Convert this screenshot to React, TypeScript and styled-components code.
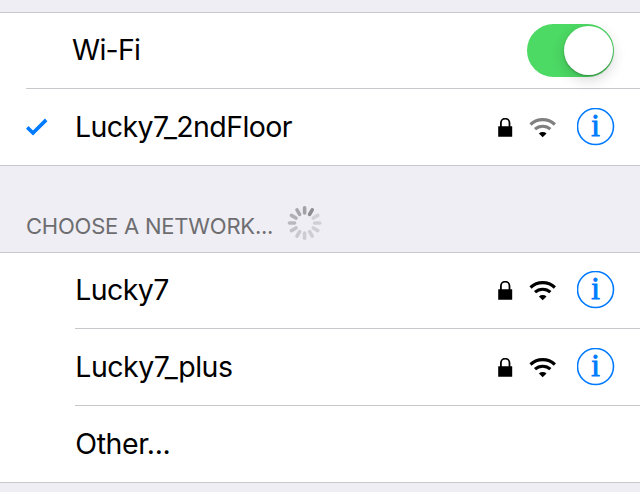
import React from "react";
import styled, { createGlobalStyle } from "styled-components";

const Global = createGlobalStyle`
  html, body { margin: 0; background: #efeef4; overflow: hidden; }
  * { box-sizing: border-box; }
`;

const Screen = styled.main`
  width: 640px;
  height: 492px;
  padding-top: 12px;
  background: #efeef4;
  font-family: Inter, "Liberation Sans", sans-serif;
  font-feature-settings: "calt" 0;
  color: #000;
`;

const Group = styled.section`
  background: #fff;
  border-top: 1px solid #c8c7cc;
  border-bottom: 1px solid #c8c7cc;
`;

const Row = styled.div<{ $height: number; $inset: number; $last?: boolean; $lift?: number }>`
  height: ${(p) => p.$height}px;
  margin-left: ${(p) => p.$inset}px;
  padding: 0 25px ${(p) => p.$lift ?? 0}px 0;
  display: flex;
  align-items: center;
  border-bottom: ${(p) => (p.$last ? "0" : "1px solid #c8c7cc")};
`;

const Label = styled.span<{ $spacing: number; $indent?: number; $lift?: number }>`
  flex: 1;
  margin-left: ${(p) => p.$indent ?? 0}px;
  padding-bottom: ${(p) => p.$lift ?? 0}px;
  font-size: 28.5px;
  line-height: 36px;
  letter-spacing: ${(p) => p.$spacing}px;
  white-space: nowrap;
`;

const Switch = styled.button`
  width: 87px;
  height: 53px;
  margin-right: 0.6px;
  padding: 2px 1.4px 2px 2px;
  border: 0;
  border-radius: 27px;
  background: #4cd964;
  display: flex;
  justify-content: flex-end;
`;

const Knob = styled.span`
  width: 49px;
  height: 49px;
  border-radius: 50%;
  background: #fff;
  box-shadow: 0 1px 2px rgba(0, 0, 0, 0.28), 0 5px 14px rgba(0, 0, 0, 0.16);
`;

const CheckSlot = styled.span`
  width: 49px;
  height: 24px;
  display: flex;
`;

const Accessories = styled.div`
  height: 38px;
  display: flex;
  align-items: center;
`;

const LockSvg = styled.svg`
  display: block;
  margin: 1px 16px 0 0;
`;

const WifiSvg = styled.svg`
  display: block;
  margin: 1px 20px 0 0;
`;

const InfoSvg = styled.svg`
  display: block;
`;

const InfoLetter = styled.text`
  font-family: "Liberation Serif", serif;
  font-size: 31px;
  fill: #007aff;
  stroke: #007aff;
  stroke-width: 0.9px;
  text-anchor: middle;
`;

const SectionHeader = styled.header`
  height: 86px;
  padding-left: 26px;
  display: flex;
  align-items: flex-start;
`;

const SectionTitle = styled.h2`
  width: 261px;
  margin: 46px 0 0;
  font-size: 22px;
  line-height: 28px;
  font-weight: 400;
  letter-spacing: -0.22px;
  color: #6d6d70;
  white-space: nowrap;
`;

const SpinnerSvg = styled.svg`
  display: block;
  margin-top: 39px;
`;

const Check = () => (
  <svg width="24" height="24" viewBox="0 0 24 24">
    <path d="M1.2 12.4 7 18 20.2 4.9" fill="none" stroke="#007aff" strokeWidth="3.6" />
  </svg>
);

const Lock = () => (
  <LockSvg width="15" height="20" viewBox="0 0 15 20">
    <rect x="0.2" y="8.2" width="14" height="10.6" rx="0.4" />
    <path d="M2.9 9V5a4.3 4.3 0 0 1 8.6 0V9" fill="none" stroke="#000" strokeWidth="1.8" />
  </LockSvg>
);

const Wifi = ({ weak }: { weak?: boolean }) => (
  <WifiSvg width="28" height="20" viewBox="0 0 28 20">
    <g fill="none" stroke={weak ? "#808080" : "#000"} strokeWidth="3.1">
      <path d="M1.5 6.5A17.8 17.8 0 0 1 25.9 6.5" />
      <path d="M6 11.2A11.4 11.4 0 0 1 21.4 11.2" />
    </g>
    <path d="M9.9 15.4A5.6 5.6 0 0 1 17.5 15.4L13.7 19.2Z" />
  </WifiSvg>
);

const Info = () => (
  <InfoSvg width="38" height="38" viewBox="0 0 38 38">
    <circle cx="18.5" cy="18.5" r="18" fill="none" stroke="#007aff" strokeWidth="1.6" />
    <InfoLetter x="18.5" y="28.2">i</InfoLetter>
  </InfoSvg>
);

const BLADES = ["#a2a2a5", "#8e8e92", "#d2d2d6", "#d0d0d4", "#d0d0d4", "#cecfd2", "#cdcdd1", "#cacace", "#c3c3c7", "#b9b9bd", "#b0b0b4", "#a8a8ac"];

const Spinner = () => (
  <SpinnerSvg width="36" height="36" viewBox="-17.6 -18 36 36">
    {BLADES.map((color, i) => (
      <line key={i} y1="-15.2" y2="-10" stroke={color} strokeWidth="3.6" strokeLinecap="round" transform={`rotate(${i * 30})`} />
    ))}
  </SpinnerSvg>
);

const NetworkDetails = ({ weak }: { weak?: boolean }) => (
  <Accessories>
    <Lock />
    <Wifi weak={weak} />
    <Info />
  </Accessories>
);

export default function App() {
  return (
    <>
      <Global />
      <Screen>
        <Group>
          <Row $height={76} $inset={26}>
            <Label $spacing={-0.7} $indent={46} $lift={2}>Wi-Fi</Label>
            <Switch aria-label="Wi-Fi"><Knob /></Switch>
          </Row>
          <Row $height={76} $inset={26} $last>
            <CheckSlot><Check /></CheckSlot>
            <Label $spacing={-0.6}>Lucky7_2ndFloor</Label>
            <NetworkDetails weak />
          </Row>
        </Group>
        <SectionHeader>
          <SectionTitle>CHOOSE A NETWORK...</SectionTitle>
          <Spinner />
        </SectionHeader>
        <Group>
          <Row $height={76} $inset={75} $lift={1}>
            <Label $spacing={-0.6} $indent={0.3}>Lucky7</Label>
            <NetworkDetails />
          </Row>
          <Row $height={77} $inset={75}>
            <Label $spacing={-0.5} $indent={0.3}>Lucky7_plus</Label>
            <NetworkDetails />
          </Row>
          <Row $height={76} $inset={75} $last>
            <Label $spacing={-0.4} $indent={0.3}>Other...</Label>
          </Row>
        </Group>
      </Screen>
    </>
  );
}
